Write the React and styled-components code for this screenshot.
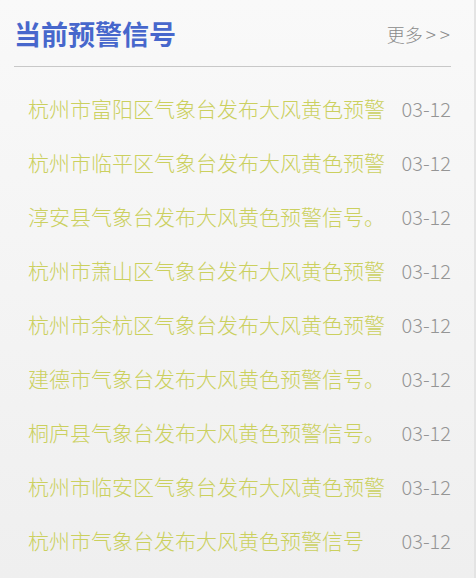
import styled, { createGlobalStyle } from 'styled-components';

const GlobalStyle = createGlobalStyle`
    html, body {
        margin: 0;
        padding: 0;
    }
    body {
        font-family: "Noto Sans CJK SC", "Noto Sans", sans-serif;
    }
`

const Panel = styled.div`
    width: 476px;
    height: 578px;
    box-sizing: border-box;
    padding: 0 23px 0 14px;
    background: linear-gradient(to bottom, #f9f9f9 0%, #efefef 100%);
    border-right: 2px solid #e4e4e4;
    overflow: hidden;
`

const Header = styled.div`
    display: flex;
    align-items: center;
    justify-content: space-between;
    height: 66px;
    border-bottom: 1px solid #c8c8c8;
`

const Title = styled.h2`
    margin: 0;
    font-size: 27px;
    font-weight: 700;
    color: #4767cc;
    line-height: 1;
`

const More = styled.a`
    flex-shrink: 0;
    white-space: nowrap;
    font-size: 18px;
    font-weight: 300;
    color: #8a8a8a;
    text-decoration: none;
    margin-right: -3px;

    span {
        font-size: 19px;
        letter-spacing: 4px;
        margin-left: 3px;
    }
`

const List = styled.ul`
    list-style: none;
    margin: 0;
    padding: 14px 0 0 14px;
`

const Item = styled.li`
    display: flex;
    align-items: center;
    height: 54px;
`

const ItemTitle = styled.span`
    flex: 1;
    min-width: 0;
    font-size: 21px;
    font-weight: 300;
    color: #cbd05e;
    white-space: nowrap;
    overflow: hidden;
`

const ItemDate = styled.span`
    margin-left: 14px;
    font-size: 20px;
    font-weight: 300;
    color: #959595;
    white-space: nowrap;
`

const warnings = [
    '杭州市富阳区气象台发布大风黄色预警',
    '杭州市临平区气象台发布大风黄色预警',
    '淳安县气象台发布大风黄色预警信号。',
    '杭州市萧山区气象台发布大风黄色预警',
    '杭州市余杭区气象台发布大风黄色预警',
    '建德市气象台发布大风黄色预警信号。',
    '桐庐县气象台发布大风黄色预警信号。',
    '杭州市临安区气象台发布大风黄色预警',
    '杭州市气象台发布大风黄色预警信号',
];

const App = () => {
    return (
        <>
            <GlobalStyle />
            <Panel>
                <Header>
                    <Title>当前预警信号</Title>
                    <More href="#">更多<span>&gt;&gt;</span></More>
                </Header>
                <List>
                    {warnings.map((w, i) => (
                        <Item key={i}>
                            <ItemTitle>{w}</ItemTitle>
                            <ItemDate>03-12</ItemDate>
                        </Item>
                    ))}
                </List>
            </Panel>
        </>
    )
}

export default App;
